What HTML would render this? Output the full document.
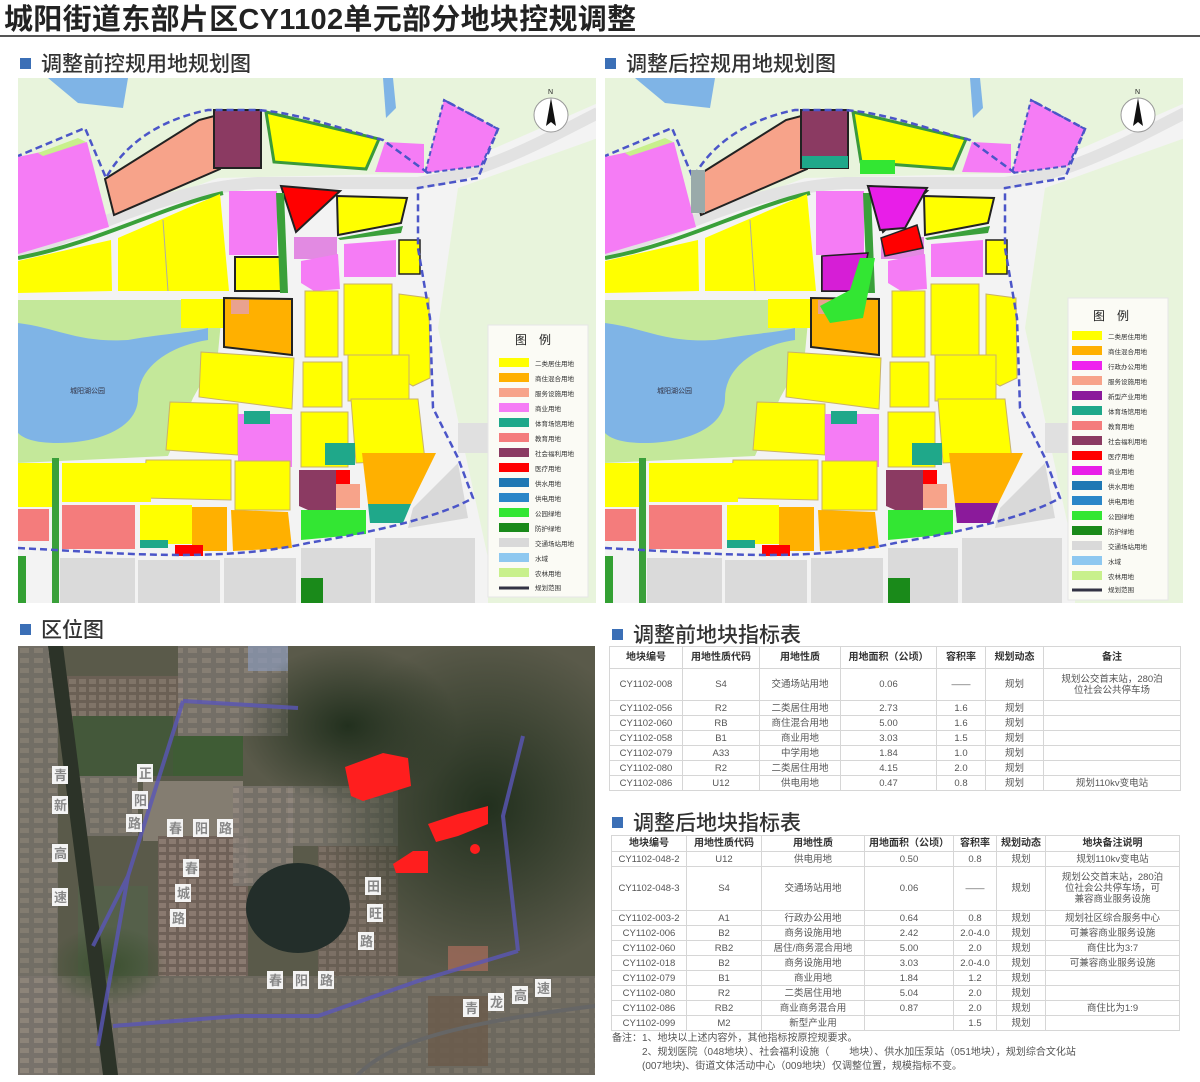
<!DOCTYPE html>
<html><head><meta charset="utf-8">
<style>
*{margin:0;padding:0;box-sizing:border-box}
body{width:1200px;height:1082px;background:#fff;position:relative;overflow:hidden;font-family:"Liberation Sans","Noto Sans CJK SC",sans-serif;color:#333}
.abs{position:absolute}
.title{left:4px;top:-4px;font-size:29px;font-weight:bold;color:#222;letter-spacing:0.3px;white-space:nowrap}
.rule{left:0;top:35px;width:1200px;height:2px;background:#555}
.h{font-size:21px;color:#333;white-space:nowrap;font-weight:500}
.h b{display:inline-block;width:11px;height:11px;background:#3b6fb6;margin-right:10px;vertical-align:2px}
table{border-collapse:collapse;font-size:9.5px;color:#555;table-layout:fixed}
td{border:1px solid #d6d6d6;text-align:center;line-height:11px;padding:0 1px;white-space:nowrap;overflow:hidden}
tr.hd td{font-weight:bold;color:#333;font-size:10px}
.note{font-size:10px;color:#555;line-height:14px;white-space:nowrap}
</style></head><body>

<svg width="0" height="0" style="position:absolute">
<defs>
<g id="base">
<rect width="578" height="525" fill="#e8f4dc"/>
<path d="M30,0 L110,0 L105,30 L60,25 Z" fill="#7fb4e6"/>
<path d="M365,0 L375,0 L378,30 L368,40 Z" fill="#7fb4e6"/>
<path d="M0,170 L90,140 L200,100 L420,95 L580,25 L580,60 L440,110 L420,250 L470,480 L470,525 L0,525 Z" fill="#f3f3f3"/>
<path d="M0,176 C80,150 150,110 240,105 L400,105 C470,95 530,60 580,35" stroke="#e2e2e2" stroke-width="12" fill="none"/>
<path d="M0,79 L69,64 L91,149 L0,176 Z" fill="#f57cf5"/>
<path d="M20,75 L60,60 L68,64 L25,78 Z" fill="#c8f08c"/>
<path d="M87,101 L181,42 L200,37 L202,91 L96,137 Z" fill="#f7a38a" stroke="#222" stroke-width="2"/>
<rect x="196" y="32" width="47" height="58" fill="#8b3a62" stroke="#222" stroke-width="2"/>
<path d="M248,34 L361,61 L348,91 L256,84 Z" fill="#ffff00" stroke="#3a9a3a" stroke-width="3"/>
<path d="M367,64 L406,66 L406,95 L357,94 Z" fill="#f57cf5"/>
<path d="M426,22 L480,51 L463,88 L407,95 Z" fill="#f57cf5" stroke="#4b55c8" stroke-width="2" stroke-dasharray="5,3"/>
<path d="M0,180 C80,165 140,130 205,115" stroke="#3aa03a" stroke-width="4" fill="none"/>
<path d="M0,183 L93,162 L94,213 L0,215 Z" fill="#ffff00"/>
<path d="M100,160 L202,116 L211,213 L100,213 Z" fill="#ffff00"/>
<line x1="145" y1="142" x2="150" y2="213" stroke="#aaa" stroke-width="1"/>
<rect x="211" y="113" width="48" height="64" fill="#f57cf5"/>
<rect x="217" y="179" width="46" height="34" fill="#ffff00" stroke="#222" stroke-width="2"/>
<path d="M263,108 L322,113 L278,154 Z" fill="#ff0000" stroke="#222" stroke-width="2"/>
<path d="M319,118 L389,120 L383,145 L320,157 Z" fill="#ffff00" stroke="#222" stroke-width="2"/>
<path d="M320,160 L385,148 L383,155 L322,162 Z" fill="#3aa03a"/>
<rect x="276" y="159" width="43" height="22" fill="#e28ae2"/>
<path d="M283,183 L320,176 L322,211 L296,213 L283,205 Z" fill="#f57cf5"/>
<path d="M326,166 L378,162 L378,199 L326,199 Z" fill="#f57cf5"/>
<rect x="381" y="162" width="21" height="34" fill="#ffff00" stroke="#222" stroke-width="1.5"/>
<path d="M258,115 L262,215 L270,215 L266,115 Z" fill="#3aa03a"/>
<path d="M0,222 L205,222 L200,275 L175,320 L150,378 L0,385 Z" fill="#c4e89a"/>
<path d="M0,245 C40,250 60,265 110,262 C150,255 170,255 190,250 L190,262 C150,268 120,290 120,320 C120,350 80,365 40,365 C15,365 5,360 0,355 Z" fill="#7fb4e6"/>
<text x="52" y="315" font-size="7" fill="#334" font-family="Noto Sans CJK SC">城阳湖公园</text>
<rect x="163" y="221" width="44" height="29" fill="#ffff00"/>
<path d="M206,220 L274,221 L274,277 L206,269 Z" fill="#ffb000" stroke="#222" stroke-width="2"/>
<rect x="213" y="222" width="18" height="14" fill="#e9a28f"/>
<path d="M183,274 L276,280 L274,331 L181,319 Z" fill="#ffff00" stroke="#c8b26a" stroke-width="1"/>
<rect x="287" y="213" width="33" height="66" fill="#ffff00" stroke="#c8b26a"/>
<rect x="326" y="206" width="48" height="71" fill="#ffff00" stroke="#c8b26a"/>
<path d="M381,216 L411,220 L412,300 L395,308 L381,300 Z" fill="#ffff00" stroke="#c8b26a"/>
<rect x="285" y="284" width="39" height="45" fill="#ffff00" stroke="#c8b26a"/>
<rect x="330" y="277" width="61" height="46" fill="#ffff00" stroke="#c8b26a"/>
<path d="M152,324 L220,326 L220,377 L148,372 Z" fill="#ffff00" stroke="#c8b26a"/>
<rect x="220" y="336" width="54" height="53" fill="#f57cf5"/>
<rect x="226" y="333" width="26" height="13" fill="#1fa88a"/>
<rect x="283" y="334" width="47" height="55" fill="#ffff00" stroke="#c8b26a"/>
<path d="M333,321 L400,321 L407,382 L338,385 Z" fill="#ffff00" stroke="#c8b26a"/>
<rect x="307" y="365" width="30" height="22" fill="#1fa88a"/>
<path d="M128,382 L213,382 L213,422 L125,420 Z" fill="#ffff00" stroke="#c8b26a"/>
<rect x="217" y="383" width="55" height="49" fill="#ffff00" stroke="#c8b26a"/>
<rect x="0" y="385" width="35" height="44" fill="#ffff00"/>
<rect x="44" y="385" width="89" height="39" fill="#ffff00"/>
<rect x="44" y="427" width="73" height="44" fill="#f47c7c"/>
<rect x="0" y="431" width="31" height="32" fill="#f47c7c"/>
<rect x="34" y="380" width="7" height="145" fill="#3aa03a"/>
<rect x="122" y="427" width="52" height="39" fill="#ffff00"/>
<rect x="122" y="462" width="28" height="8" fill="#1fa88a"/>
<rect x="174" y="429" width="35" height="44" fill="#ffb000"/>
<path d="M213,432 L270,434 L274,470 L215,473 Z" fill="#ffb000"/>
<rect x="157" y="467" width="28" height="11" fill="#ff0000"/>
<path d="M281,392 L318,392 L318,432 L290,432 L281,428 Z" fill="#8b3a62"/>
<rect x="318" y="392" width="14" height="14" fill="#ff0000"/>
<rect x="318" y="406" width="24" height="24" fill="#f7a38a"/>
<path d="M283,432 L348,432 L348,456 L283,462 Z" fill="#33e633"/>
<path d="M344,375 L418,375 L393,426 L350,426 Z" fill="#ffb000"/>
<path d="M350,426 L393,426 L385,445 L352,445 Z" fill="#1fa88a"/>
<path d="M395,430 L440,385 L450,440 L390,450 Z" fill="#d9d9d9"/>
<rect x="0" y="478" width="8" height="47" fill="#33a033"/>
<rect x="42" y="480" width="75" height="45" fill="#dadada"/>
<rect x="120" y="482" width="82" height="43" fill="#dadada"/>
<rect x="206" y="480" width="72" height="45" fill="#dadada"/>
<rect x="283" y="470" width="70" height="55" fill="#dadada"/>
<rect x="357" y="460" width="100" height="65" fill="#dadada"/>
<rect x="283" y="500" width="22" height="25" fill="#1a8a1a"/>
<rect x="440" y="345" width="30" height="30" fill="#e0e0e0"/>
<path d="M0,470 C100,475 200,485 290,465 C350,455 420,440 455,420 L440,380 L415,330 L412,240 L400,170 L400,110 L460,100 L480,51 L426,22 M410,95 L365,62 C320,50 280,35 240,32 L190,32 C150,40 110,60 88,100 L67,50 L0,78"
 stroke="#4b55c8" stroke-width="2.5" stroke-dasharray="7,4" fill="none"/>
<circle cx="533" cy="37" r="17" fill="#fff" stroke="#999"/>
<path d="M533,20 L528,48 L533,44 L538,48 Z" fill="#111"/>
<text x="530" y="16" font-size="7" fill="#222">N</text>
</g>
<pattern id="city" width="10" height="8" patternUnits="userSpaceOnUse">
<rect width="10" height="8" fill="#6f6158"/>
<rect x="1" y="1" width="7" height="5" fill="#8a7a70"/>
</pattern>
<pattern id="city2" width="14" height="10" patternUnits="userSpaceOnUse">
<rect width="14" height="10" fill="#7c7670"/>
<rect x="2" y="2" width="9" height="5" fill="#958a80"/>
</pattern>
</defs>
</svg>

<div class="abs title">城阳街道东部片区CY1102单元部分地块控规调整</div>
<div class="abs rule"></div>

<div class="abs h" style="left:20px;top:48px"><b></b>调整前控规用地规划图</div>
<div class="abs h" style="left:605px;top:48px"><b></b>调整后控规用地规划图</div>

<svg class="abs" style="left:18px;top:78px" width="578" height="525" viewBox="0 0 578 525">
<use href="#base"/>
<rect x="470" y="247" width="100" height="272" fill="#fbfbf5" stroke="#e6e6e6"/>
<text x="497" y="266" font-size="12" fill="#222" font-family="Noto Sans CJK SC">图　例</text>
<g font-size="6.5" fill="#333" font-family="Noto Sans CJK SC">
<rect x="481" y="280" width="30" height="9" fill="#ffff00"/><text x="517" y="288">二类居住用地</text>
<rect x="481" y="295" width="30" height="9" fill="#ffb000"/><text x="517" y="303">商住混合用地</text>
<rect x="481" y="310" width="30" height="9" fill="#f7a38a"/><text x="517" y="318">服务设施用地</text>
<rect x="481" y="325" width="30" height="9" fill="#f57cf5"/><text x="517" y="333">商业用地</text>
<rect x="481" y="340" width="30" height="9" fill="#1fa88a"/><text x="517" y="348">体育场馆用地</text>
<rect x="481" y="355" width="30" height="9" fill="#f47c7c"/><text x="517" y="363">教育用地</text>
<rect x="481" y="370" width="30" height="9" fill="#8b3a62"/><text x="517" y="378">社会福利用地</text>
<rect x="481" y="385" width="30" height="9" fill="#ff0000"/><text x="517" y="393">医疗用地</text>
<rect x="481" y="400" width="30" height="9" fill="#1f78b4"/><text x="517" y="408">供水用地</text>
<rect x="481" y="415" width="30" height="9" fill="#2a86c8"/><text x="517" y="423">供电用地</text>
<rect x="481" y="430" width="30" height="9" fill="#33e633"/><text x="517" y="438">公园绿地</text>
<rect x="481" y="445" width="30" height="9" fill="#1a8a1a"/><text x="517" y="453">防护绿地</text>
<rect x="481" y="460" width="30" height="9" fill="#d9d9d9"/><text x="517" y="468">交通场站用地</text>
<rect x="481" y="475" width="30" height="9" fill="#8ec8f0"/><text x="517" y="483">水域</text>
<rect x="481" y="490" width="30" height="9" fill="#c8f08c"/><text x="517" y="498">农林用地</text>
<line x1="481" y1="510" x2="511" y2="510" stroke="#334" stroke-width="3"/><text x="517" y="512">规划范围</text>
</g>
</svg>

<svg class="abs" style="left:605px;top:78px" width="578" height="525" viewBox="0 0 578 525">
<use href="#base"/>
<path d="M263,108 L322,110 L300,150 L275,152 Z" fill="#e81ee8" stroke="#222" stroke-width="2"/>
<path d="M276,160 L312,147 L318,170 L280,178 Z" fill="#ff0000" stroke="#222" stroke-width="1.5"/>
<path d="M217,178 L263,175 L255,213 L217,213 Z" fill="#d61ed6" stroke="#222" stroke-width="1.5"/>
<path d="M255,180 L270,180 L258,240 L225,245 L215,228 L245,212 Z" fill="#33e633"/>
<path d="M255,82 L290,82 L290,96 L255,96 Z" fill="#33e633"/>
<path d="M197,78 L243,78 L243,90 L197,90 Z" fill="#1fa88a"/>
<path d="M86,92 L100,92 L100,135 L86,135 Z" fill="#9aa"/>
<path d="M350,425 L393,425 L385,445 L352,445 Z" fill="#8b1a9b"/>
<rect x="463" y="220" width="100" height="302" fill="#fbfbf5" stroke="#e6e6e6"/>
<text x="488" y="242" font-size="12" fill="#222" font-family="Noto Sans CJK SC">图　例</text>
<g font-size="6.5" fill="#333" font-family="Noto Sans CJK SC">
<rect x="467" y="253" width="30" height="9" fill="#ffff00"/><text x="503" y="261">二类居住用地</text>
<rect x="467" y="268" width="30" height="9" fill="#ffb000"/><text x="503" y="276">商住混合用地</text>
<rect x="467" y="283" width="30" height="9" fill="#ee22ee"/><text x="503" y="291">行政办公用地</text>
<rect x="467" y="298" width="30" height="9" fill="#f7a38a"/><text x="503" y="306">服务设施用地</text>
<rect x="467" y="313" width="30" height="9" fill="#8b1a9b"/><text x="503" y="321">新型产业用地</text>
<rect x="467" y="328" width="30" height="9" fill="#1fa88a"/><text x="503" y="336">体育场馆用地</text>
<rect x="467" y="343" width="30" height="9" fill="#f47c7c"/><text x="503" y="351">教育用地</text>
<rect x="467" y="358" width="30" height="9" fill="#8b3a62"/><text x="503" y="366">社会福利用地</text>
<rect x="467" y="373" width="30" height="9" fill="#ff0000"/><text x="503" y="381">医疗用地</text>
<rect x="467" y="388" width="30" height="9" fill="#e81ee8"/><text x="503" y="396">商业用地</text>
<rect x="467" y="403" width="30" height="9" fill="#1f78b4"/><text x="503" y="411">供水用地</text>
<rect x="467" y="418" width="30" height="9" fill="#2a86c8"/><text x="503" y="426">供电用地</text>
<rect x="467" y="433" width="30" height="9" fill="#33e633"/><text x="503" y="441">公园绿地</text>
<rect x="467" y="448" width="30" height="9" fill="#1a8a1a"/><text x="503" y="456">防护绿地</text>
<rect x="467" y="463" width="30" height="9" fill="#d9d9d9"/><text x="503" y="471">交通场站用地</text>
<rect x="467" y="478" width="30" height="9" fill="#8ec8f0"/><text x="503" y="486">水域</text>
<rect x="467" y="493" width="30" height="9" fill="#c8f08c"/><text x="503" y="501">农林用地</text>
<line x1="467" y1="512" x2="497" y2="512" stroke="#334" stroke-width="3"/><text x="503" y="514">规划范围</text>
</g>
</svg>

<div class="abs h" style="left:20px;top:614px"><b></b>区位图</div>

<svg class="abs" style="left:18px;top:646px" width="577" height="429" viewBox="0 0 577 429">
<defs>
<radialGradient id="g1" cx="0.5" cy="0.5" r="0.5"><stop offset="0" stop-color="#22301e"/><stop offset="1" stop-color="#22301e" stop-opacity="0"/></radialGradient>
<radialGradient id="g3" cx="0.5" cy="0.5" r="0.5"><stop offset="0" stop-color="#3c5030"/><stop offset="1" stop-color="#3c5030" stop-opacity="0"/></radialGradient>
</defs>
<rect width="577" height="429" fill="#5a5a4a"/>
<rect x="0" y="0" width="40" height="429" fill="url(#city2)" opacity="0.7"/>
<rect x="45" y="30" width="120" height="40" fill="url(#city)" opacity="0.8"/>
<rect x="55" y="70" width="100" height="60" fill="#44583a"/>
<rect x="160" y="0" width="110" height="90" fill="url(#city2)" opacity="0.75"/>
<rect x="230" y="0" width="40" height="25" fill="#8b9ab8" opacity="0.7"/>
<rect x="155" y="90" width="70" height="40" fill="#3f5c35"/>
<rect x="60" y="130" width="60" height="60" fill="url(#city2)" opacity="0.7"/>
<rect x="125" y="135" width="100" height="60" fill="#8c8478" opacity="0.85"/>
<rect x="140" y="190" width="90" height="140" fill="url(#city)"/>
<rect x="215" y="140" width="60" height="100" fill="url(#city2)" opacity="0.8"/>
<rect x="270" y="140" width="110" height="60" fill="url(#city2)" opacity="0.7"/>
<rect x="300" y="200" width="80" height="130" fill="url(#city)" opacity="0.7"/>
<rect x="0" y="330" width="577" height="99" fill="url(#city2)" opacity="0.55"/>
<rect x="60" y="240" width="70" height="90" fill="#55604a"/>
<ellipse cx="470" cy="160" rx="170" ry="170" fill="url(#g1)"/>
<ellipse cx="330" cy="80" rx="110" ry="80" fill="url(#g1)"/>
<ellipse cx="90" cy="320" rx="60" ry="40" fill="url(#g3)"/>
<rect x="410" y="350" width="60" height="70" fill="#6a5a4a" opacity="0.8"/>
<rect x="430" y="300" width="40" height="25" fill="#a06a5a" opacity="0.8"/>
<ellipse cx="280" cy="262" rx="52" ry="45" fill="#232e2a"/>
<path d="M30,0 L45,0 L100,429 L85,429 Z" fill="#2c3328"/>
<path d="M165,55 L280,62 M165,55 L110,230 L75,300 M110,230 L80,400 M95,380 L220,370 L300,370 L400,335 L500,305 M500,305 L485,170 L505,90" stroke="#5a56b8" stroke-width="4" fill="none" opacity="0.8"/>
<path d="M330,440 C360,400 420,380 577,360" stroke="#666" stroke-width="4" fill="none"/>
<path d="M327,121 L365,107 L390,112 L393,140 L345,155 L333,150 Z" fill="#ff1e1e"/>
<path d="M410,178 L440,168 L470,160 L470,178 L440,190 L418,196 Z" fill="#ff1e1e"/>
<path d="M375,218 L395,205 L410,205 L410,227 L378,227 Z" fill="#ff1e1e"/>
<circle cx="457" cy="203" r="5" fill="#ff1e1e"/>
<g fill="#f4f4f4">
<rect x="34" y="120" width="16" height="18"/><rect x="34" y="150" width="16" height="18"/><rect x="34" y="198" width="16" height="18"/><rect x="34" y="242" width="16" height="18"/>
<rect x="119" y="118" width="16" height="18"/><rect x="114" y="145" width="16" height="18"/><rect x="108" y="168" width="16" height="18"/>
<rect x="149" y="173" width="16" height="18"/><rect x="175" y="173" width="16" height="18"/><rect x="199" y="173" width="16" height="18"/>
<rect x="165" y="213" width="16" height="18"/><rect x="157" y="238" width="16" height="18"/><rect x="152" y="263" width="16" height="18"/>
<rect x="347" y="231" width="16" height="18"/><rect x="349" y="258" width="16" height="18"/><rect x="340" y="286" width="16" height="18"/>
<rect x="249" y="325" width="16" height="18"/><rect x="275" y="325" width="16" height="18"/><rect x="300" y="325" width="16" height="18"/>
<rect x="445" y="353" width="16" height="18"/><rect x="470" y="347" width="16" height="18"/><rect x="494" y="340" width="16" height="18"/><rect x="517" y="333" width="16" height="18"/>
</g>
<g font-family="Noto Sans CJK SC" font-weight="bold" font-size="13" fill="#888">
<text x="36" y="134">青</text><text x="36" y="164">新</text><text x="36" y="212">高</text><text x="36" y="256">速</text>
<text x="121" y="132">正</text><text x="116" y="159">阳</text><text x="110" y="182">路</text>
<text x="151" y="187">春</text><text x="177" y="187">阳</text><text x="201" y="187">路</text>
<text x="167" y="227">春</text><text x="159" y="252">城</text><text x="154" y="277">路</text>
<text x="349" y="245">田</text><text x="351" y="272">旺</text><text x="342" y="300">路</text>
<text x="251" y="339">春</text><text x="277" y="339">阳</text><text x="302" y="339">路</text>
<text x="447" y="367">青</text><text x="472" y="361">龙</text><text x="496" y="354">高</text><text x="519" y="347">速</text>
</g>
</svg>

<div class="abs h" style="left:612px;top:619px"><b></b>调整前地块指标表</div>
<table class="abs" style="left:609px;top:646px;width:572px">
<colgroup><col style="width:73px"><col style="width:77px"><col style="width:81px"><col style="width:96px"><col style="width:49px"><col style="width:58px"><col></colgroup>
<tr class="hd" style="height:22px"><td>地块编号</td><td>用地性质代码</td><td>用地性质</td><td>用地面积（公顷）</td><td>容积率</td><td>规划动态</td><td>备注</td></tr>
<tr style="height:32px"><td>CY1102-008</td><td>S4</td><td>交通场站用地</td><td>0.06</td><td>——</td><td>规划</td><td>规划公交首末站，280泊<br>位社会公共停车场</td></tr>
<tr style="height:15px"><td>CY1102-056</td><td>R2</td><td>二类居住用地</td><td>2.73</td><td>1.6</td><td>规划</td><td></td></tr>
<tr style="height:15px"><td>CY1102-060</td><td>RB</td><td>商住混合用地</td><td>5.00</td><td>1.6</td><td>规划</td><td></td></tr>
<tr style="height:15px"><td>CY1102-058</td><td>B1</td><td>商业用地</td><td>3.03</td><td>1.5</td><td>规划</td><td></td></tr>
<tr style="height:15px"><td>CY1102-079</td><td>A33</td><td>中学用地</td><td>1.84</td><td>1.0</td><td>规划</td><td></td></tr>
<tr style="height:15px"><td>CY1102-080</td><td>R2</td><td>二类居住用地</td><td>4.15</td><td>2.0</td><td>规划</td><td></td></tr>
<tr style="height:15px"><td>CY1102-086</td><td>U12</td><td>供电用地</td><td>0.47</td><td>0.8</td><td>规划</td><td>规划110kv变电站</td></tr>
</table>

<div class="abs h" style="left:612px;top:807px"><b></b>调整后地块指标表</div>
<table class="abs" style="left:611px;top:835px;width:569px">
<colgroup><col style="width:75px"><col style="width:75px"><col style="width:103px"><col style="width:89px"><col style="width:43px"><col style="width:49px"><col></colgroup>
<tr class="hd" style="height:16px"><td>地块编号</td><td>用地性质代码</td><td>用地性质</td><td>用地面积（公顷）</td><td>容积率</td><td>规划动态</td><td>地块备注说明</td></tr>
<tr style="height:15px"><td>CY1102-048-2</td><td>U12</td><td>供电用地</td><td>0.50</td><td>0.8</td><td>规划</td><td>规划110kv变电站</td></tr>
<tr style="height:44px"><td>CY1102-048-3</td><td>S4</td><td>交通场站用地</td><td>0.06</td><td>——</td><td>规划</td><td>规划公交首末站，280泊<br>位社会公共停车场，可<br>兼容商业服务设施</td></tr>
<tr style="height:15px"><td>CY1102-003-2</td><td>A1</td><td>行政办公用地</td><td>0.64</td><td>0.8</td><td>规划</td><td>规划社区综合服务中心</td></tr>
<tr style="height:15px"><td>CY1102-006</td><td>B2</td><td>商务设施用地</td><td>2.42</td><td>2.0-4.0</td><td>规划</td><td>可兼容商业服务设施</td></tr>
<tr style="height:15px"><td>CY1102-060</td><td>RB2</td><td>居住/商务混合用地</td><td>5.00</td><td>2.0</td><td>规划</td><td>商住比为3:7</td></tr>
<tr style="height:15px"><td>CY1102-018</td><td>B2</td><td>商务设施用地</td><td>3.03</td><td>2.0-4.0</td><td>规划</td><td>可兼容商业服务设施</td></tr>
<tr style="height:15px"><td>CY1102-079</td><td>B1</td><td>商业用地</td><td>1.84</td><td>1.2</td><td>规划</td><td></td></tr>
<tr style="height:15px"><td>CY1102-080</td><td>R2</td><td>二类居住用地</td><td>5.04</td><td>2.0</td><td>规划</td><td></td></tr>
<tr style="height:15px"><td>CY1102-086</td><td>RB2</td><td>商业商务混合用</td><td>0.87</td><td>2.0</td><td>规划</td><td>商住比为1:9</td></tr>
<tr style="height:15px"><td>CY1102-099</td><td>M2</td><td>新型产业用</td><td></td><td>1.5</td><td>规划</td><td></td></tr>
</table>
<div class="abs note" style="left:612px;top:1032px">备注：1、地块以上述内容外，其他指标按原控规要求。<br>　　　2、规划医院（048地块）、社会福利设施（　　地块）、供水加压泵站（051地块），规划综合文化站<br>　　　(007地块)、街道文体活动中心（009地块）仅调整位置，规模指标不变。</div>
</body></html>
